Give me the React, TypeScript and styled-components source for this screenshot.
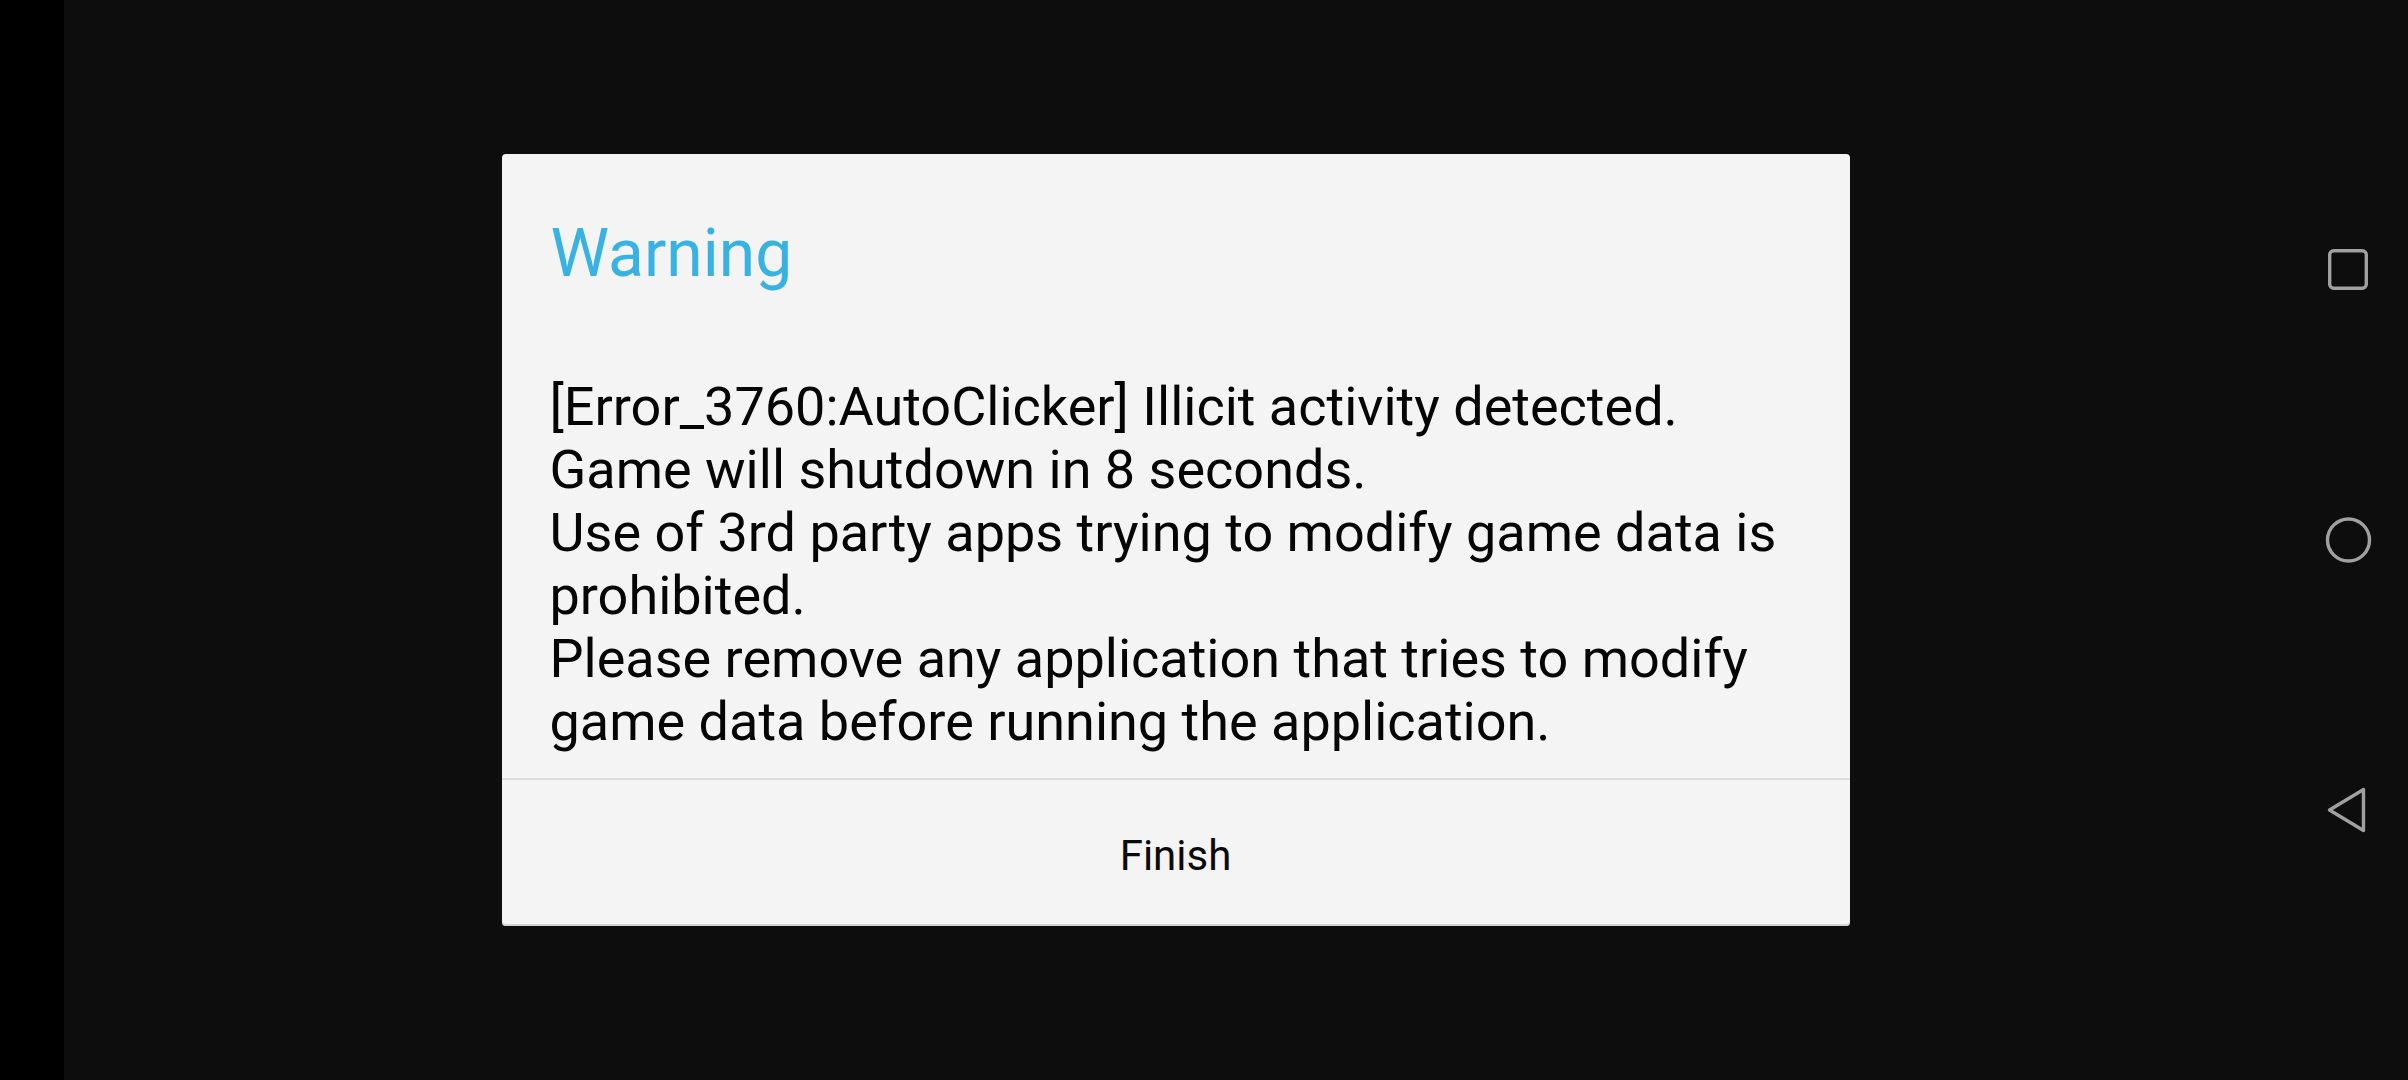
import React from "react";
import styled, { createGlobalStyle } from "styled-components";

const GlobalStyle = createGlobalStyle`
  html, body {
    margin: 0;
    padding: 0;
    background: #0e0d0e;
  }
  #root {
    width: 2408px;
    height: 1080px;
  }
  * { box-sizing: border-box; }
`;

const Screen = styled.div`
  display: flex;
  width: 2408px;
  height: 1080px;
  overflow: hidden;
  font-family: Roboto, "Noto Sans", "Liberation Sans", sans-serif;
`;

const SideStrip = styled.div`
  width: 64px;
  flex: 0 0 64px;
  background: #000000;
`;

const Stage = styled.main`
  flex: 1;
  display: flex;
  align-items: center;
  justify-content: center;
  background: #0e0d0e;
`;

const NavBar = styled.nav`
  width: 121px;
  flex: 0 0 121px;
  display: grid;
  grid-template-rows: repeat(3, 270px);
  padding: 135px 0;
  justify-items: center;
  align-items: center;
  background: #0e0d0e;
`;

const NavIcon = styled.svg`
  width: 48px;
  height: 48px;
  fill: none;
  stroke: #a0a0a0;
  stroke-width: 3.4;
  stroke-linejoin: round;
`;

const Dialog = styled.section`
  width: 1348px;
  height: 772px;
  display: flex;
  flex-direction: column;
  background: #f4f4f4;
  border-radius: 4px;
  box-shadow: inset 0 -2px 0 #d2d2d2;
`;

const Title = styled.h1`
  margin: 0;
  padding: 60px 48px 0 49px;
  font-size: 66px;
  line-height: 80px;
  font-weight: 400;
  color: #38b2e3;
`;

const Body = styled.p`
  margin: 0;
  padding: 81px 48px 25px 48px;
  font-size: 54px;
  line-height: 63px;
  font-weight: 400;
  color: #050505;
`;

const Divider = styled.hr`
  margin: 0;
  border: none;
  height: 2px;
  background: #dcdcdc;
`;

const FinishButton = styled.button`
  flex: 1;
  display: flex;
  align-items: center;
  justify-content: center;
  padding: 4px 0 0 0;
  border: none;
  background: transparent;
  font-family: inherit;
  font-size: 42px;
  color: #0a0a0a;
  cursor: pointer;
`;

export default function App() {
  return (
    <>
      <GlobalStyle />
      <Screen>
        <SideStrip />
        <Stage>
          <Dialog>
            <Title>Warning</Title>
            <Body>
              [Error_3760:AutoClicker] Illicit activity detected.
              <br />
              Game will shutdown in 8 seconds.
              <br />
              Use of 3rd party apps trying to modify game data is prohibited.
              <br />
              Please remove any application that tries to modify game data before running the application.
            </Body>
            <Divider />
            <FinishButton>Finish</FinishButton>
          </Dialog>
        </Stage>
        <NavBar>
          <NavIcon viewBox="0 0 48 48">
            <rect x="5.7" y="4.7" width="36.6" height="37.6" rx="4" />
          </NavIcon>
          <NavIcon viewBox="0 0 48 48">
            <circle cx="24.5" cy="24" r="21" />
          </NavIcon>
          <NavIcon viewBox="0 0 48 48">
            <polygon points="5.5,24 39.5,3.5 39.5,44.5" />
          </NavIcon>
        </NavBar>
      </Screen>
    </>
  );
}
